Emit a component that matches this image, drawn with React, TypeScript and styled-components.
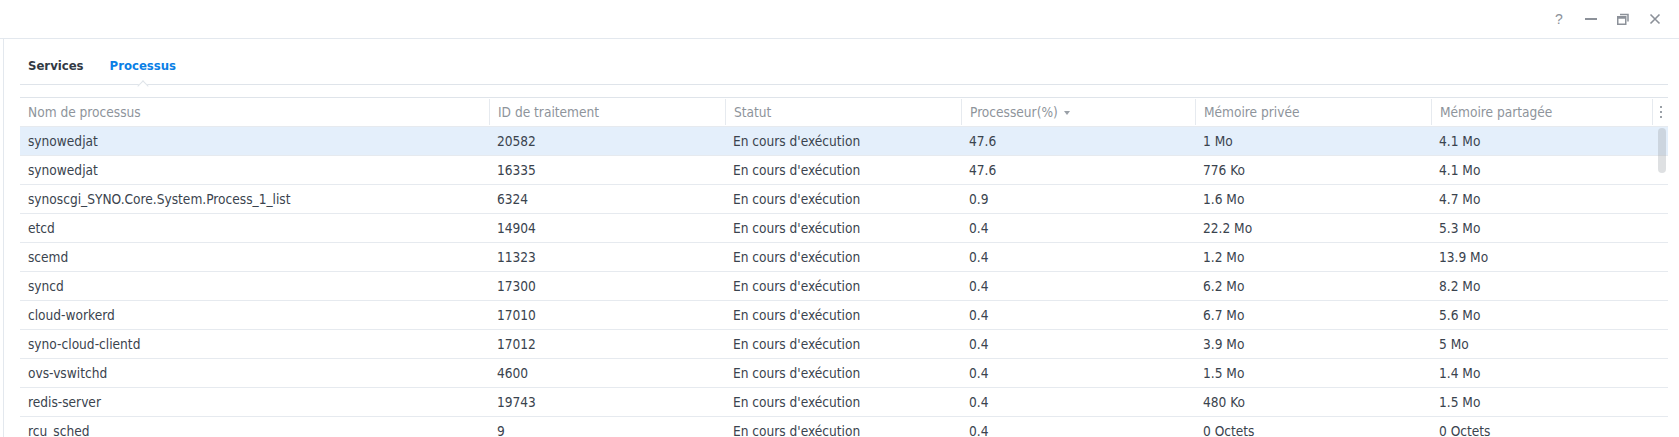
import React from "react"
import styled, { createGlobalStyle } from "styled-components"

const GlobalStyle = createGlobalStyle`
  html, body {
    margin: 0;
    padding: 0;
    background: #ffffff;
    font-family: "DejaVu Sans Condensed", "DejaVu Sans", sans-serif;
    font-stretch: semi-condensed;
    overflow: hidden;
  }
`

const rows = [
  ["synowedjat", "20582", "47.6", "1 Mo", "4.1 Mo"],
  ["synowedjat", "16335", "47.6", "776 Ko", "4.1 Mo"],
  ["synoscgi_SYNO.Core.System.Process_1_list", "6324", "0.9", "1.6 Mo", "4.7 Mo"],
  ["etcd", "14904", "0.4", "22.2 Mo", "5.3 Mo"],
  ["scemd", "11323", "0.4", "1.2 Mo", "13.9 Mo"],
  ["syncd", "17300", "0.4", "6.2 Mo", "8.2 Mo"],
  ["cloud-workerd", "17010", "0.4", "6.7 Mo", "5.6 Mo"],
  ["syno-cloud-clientd", "17012", "0.4", "3.9 Mo", "5 Mo"],
  ["ovs-vswitchd", "4600", "0.4", "1.5 Mo", "1.4 Mo"],
  ["redis-server", "19743", "0.4", "480 Ko", "1.5 Mo"],
  ["rcu_sched", "9", "0.4", "0 Octets", "0 Octets"],
]

const App = () => {
  return (
    <Window>
      <GlobalStyle />
      <TitleBar>
        <Controls>
          <Control>
            <Question>?</Question>
          </Control>
          <Control>
            <svg width="12" height="12" viewBox="0 0 12 12">
              <rect x="0" y="5" width="12" height="2" fill="#8c9199" />
            </svg>
          </Control>
          <Control>
            <svg width="12" height="12" viewBox="0 0 12 12">
              <rect x="0.75" y="3.75" width="8" height="7.5" fill="none" stroke="#8c9199" strokeWidth="1.5" />
              <rect x="0.75" y="3.75" width="8" height="2" fill="#8c9199" />
              <path d="M3 1.5 H11 V8.5" fill="none" stroke="#8c9199" strokeWidth="1.5" />
            </svg>
          </Control>
          <Control>
            <svg width="12" height="12" viewBox="0 0 12 12">
              <path d="M1.5 1.5 L10.5 10.5 M10.5 1.5 L1.5 10.5" stroke="#8c9199" strokeWidth="1.6" />
            </svg>
          </Control>
        </Controls>
      </TitleBar>

      <Body>
        <Tabs>
          <Tab>Services</Tab>
          <Tab $active>
            Processus
            <Notch />
          </Tab>
        </Tabs>

        <Table>
          <HeaderRow>
            <HeaderCell>Nom de processus</HeaderCell>
            <HeaderCell>ID de traitement</HeaderCell>
            <HeaderCell>Statut</HeaderCell>
            <HeaderCell>
              Processeur(%)
              <SortArrow />
            </HeaderCell>
            <HeaderCell>Mémoire privée</HeaderCell>
            <HeaderCell>Mémoire partagée</HeaderCell>
            <MenuCell>
              <svg width="4" height="12" viewBox="0 0 4 12">
                <rect x="1" y="0" width="2" height="2" fill="#9aa0a7" />
                <rect x="1" y="5" width="2" height="2" fill="#9aa0a7" />
                <rect x="1" y="10" width="2" height="2" fill="#9aa0a7" />
              </svg>
            </MenuCell>
          </HeaderRow>

          <Rows>
            {rows.map((r, i) => (
              <Row key={i} $selected={i === 0}>
                <Cell>{r[0]}</Cell>
                <Cell>{r[1]}</Cell>
                <Cell>En cours d'exécution</Cell>
                <Cell>{r[2]}</Cell>
                <Cell>{r[3]}</Cell>
                <Cell>{r[4]}</Cell>
                <Cell />
              </Row>
            ))}
            <Scrollbar />
          </Rows>
        </Table>
      </Body>
    </Window>
  )
}

const Window = styled.div`
  width: 1679px;
  height: 437px;
  overflow: hidden;
  display: flex;
  flex-direction: column;
`

const TitleBar = styled.div`
  height: 39px;
  flex-shrink: 0;
  border-bottom: 1px solid #e3e8ee;
  display: flex;
  justify-content: flex-end;
  align-items: center;
  padding-right: 18px;
  box-sizing: border-box;
`

const Controls = styled.div`
  display: flex;
  align-items: center;
  gap: 20px;
`

const Control = styled.div`
  width: 12px;
  height: 12px;
  display: flex;
  align-items: center;
  justify-content: center;
`

const Question = styled.span`
  font-family: "Liberation Sans", Arial, sans-serif;
  font-size: 14px;
  color: #8c9199;
  line-height: 12px;
`

const Body = styled.div`
  flex: 1;
  margin-left: 3px;
  border-left: 1px solid #e3e8ee;
  padding: 0 11px 0 16px;
  display: flex;
  flex-direction: column;
  min-height: 0;
`

const Tabs = styled.div`
  height: 46px;
  flex-shrink: 0;
  border-bottom: 1px solid #dfe4ea;
  display: flex;
  align-items: center;
  gap: 26px;
  padding: 8px 0 0 8px;
  box-sizing: border-box;
  margin-bottom: 12px;
`

const Tab = styled.div<{ $active?: boolean }>`
  position: relative;
  height: 100%;
  display: flex;
  align-items: center;
  font-size: 13px;
  font-weight: bold;
  color: ${(p) => (p.$active ? "#0a7fe6" : "#323a44")};
`

const Notch = styled.span`
  position: absolute;
  left: 50%;
  bottom: -1px;
  width: 8px;
  height: 8px;
  margin-left: -4px;
  background: #ffffff;
  border-left: 1px solid #dfe4ea;
  border-top: 1px solid #dfe4ea;
  transform: translateY(5px) rotate(45deg);
  box-sizing: border-box;
`

const Table = styled.div`
  border-top: 1px solid #dfe4ea;
  display: flex;
  flex-direction: column;
  flex: 1;
  min-height: 0;
`

const columns = "469px 236px 236px 234px 236px 221px 16px"

const HeaderRow = styled.div`
  display: grid;
  grid-template-columns: ${columns};
  height: 28px;
  border-bottom: 1px solid #e6eaef;
  flex-shrink: 0;
`

const HeaderCell = styled.div`
  display: flex;
  align-items: center;
  padding: 0 8px;
  font-size: 13.6px;
  color: #8e949b;
  white-space: nowrap;
  border-left: 1px solid #e6eaef;
  margin: 1px 0;

  &:first-child {
    border-left: none;
  }
`

const MenuCell = styled.div`
  display: flex;
  align-items: center;
  justify-content: center;
  border-left: 1px solid #e6eaef;
  margin: 1px 0;
`

const SortArrow = styled.span`
  display: inline-block;
  margin-left: 6px;
  margin-top: 1px;
  width: 0;
  height: 0;
  border-left: 3px solid transparent;
  border-right: 3px solid transparent;
  border-top: 4px solid #9aa0a7;
`

const Rows = styled.div`
  position: relative;
`

const Row = styled.div<{ $selected?: boolean }>`
  display: grid;
  grid-template-columns: ${columns};
  height: 28px;
  border-bottom: 1px solid #e6eaef;
  background: ${(p) => (p.$selected ? "#e4effb" : "#ffffff")};
`

const Cell = styled.div`
  display: flex;
  align-items: center;
  padding: 0 8px;
  font-size: 13.6px;
  color: #3a434e;
  white-space: nowrap;
  overflow: hidden;
`

const Scrollbar = styled.div`
  position: absolute;
  top: 1px;
  right: 2px;
  width: 8px;
  height: 45px;
  border-radius: 4px;
  background: rgba(160, 166, 172, 0.35);
`

export default App
